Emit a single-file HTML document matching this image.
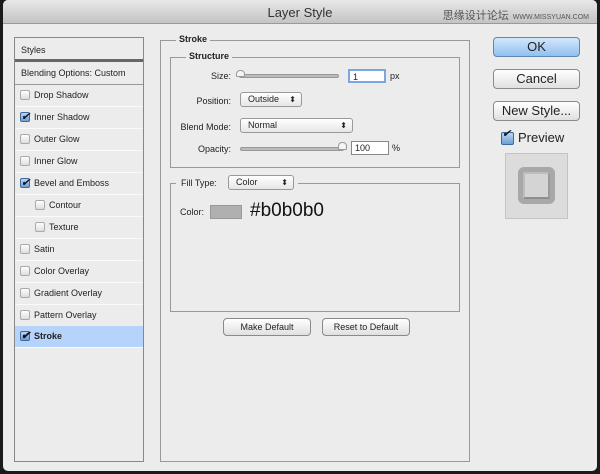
<!DOCTYPE html>
<html><head><meta charset="utf-8"><style>
*{box-sizing:border-box;margin:0;padding:0}
body{width:600px;height:474px;background:#1b1b1b;font-family:"Liberation Sans","Noto Sans CJK SC",sans-serif;font-size:9px;color:#222;position:relative;overflow:hidden}
.dlg{position:absolute;left:3px;top:0;width:594px;height:471px;background:#ececec;border-radius:5px;overflow:hidden}
.title{position:absolute;left:0;top:0;width:594px;height:24px;background:linear-gradient(#e8e8e8,#c4c4c4);border-bottom:1px solid #999;text-align:center;font-size:13px;line-height:25px;color:#333}
.wm{position:absolute;right:8px;top:4px;font-size:11px;color:#555;letter-spacing:0}
.wm small{font-size:7px;margin-left:4px}
.a{position:absolute}
.left{left:11px;top:37px;width:130px;height:425px;border:1px solid #888;background:#ececec}
.row{position:absolute;left:0;width:128px;height:22px;border-bottom:1px solid #fafafa;line-height:21px;padding-left:19px;font-size:9px}
.cb{position:absolute;left:5px;top:5px;width:10px;height:10px;border:1px solid #aaa;border-radius:2px;background:linear-gradient(#fff,#ddd)}
.cb.on{border-color:#3a6aa0;background:linear-gradient(#bcd5f0,#6f9fd6)}
.cb.on::after{content:"✔";position:absolute;left:0;top:-6px;font-size:11px;color:#111}
.grp{border:1px solid #999}
.lg{position:absolute;background:#ececec;padding:0 3px;font-weight:bold;font-size:9px}
.lbl{position:absolute;text-align:right;font-size:9px}
.sel{position:absolute;height:15px;border:1px solid #999;border-radius:3px;background:linear-gradient(#fff,#e6e6e6);font-size:9px;line-height:13px;padding-left:7px}
.sel::after{content:"⬍";position:absolute;right:5px;top:0;font-size:8px}
.slider{position:absolute;height:4px;border:1px solid #999;border-radius:2px;background:#bbb}
.inp{position:absolute;height:14px;border:1px solid #888;background:#fff;font-size:9px;line-height:12px;padding-left:3px}
.btn{position:absolute;border:1px solid #8a8a8a;border-radius:4px;background:linear-gradient(#fff,#e0e0e0);text-align:center;font-size:9px}
.bb{font-size:13px}
</style></head><body>
<div class="dlg">
<div class="title">Layer Style<span class="wm">思缘设计论坛<small>WWW.MISSYUAN.COM</small></span></div>
<div class="a left">
 <div class="row" style="top:0;height:24px;padding-left:6px;line-height:24px;border-bottom:3px solid #666">Styles</div>
 <div class="row" style="top:25px;height:22px;padding-left:6px;border-bottom:1px solid #999">Blending Options: Custom</div>
 <div class="row" style="top:47px"><i class="cb"></i>Drop Shadow</div>
 <div class="row" style="top:69px"><i class="cb on"></i>Inner Shadow</div>
 <div class="row" style="top:91px"><i class="cb"></i>Outer Glow</div>
 <div class="row" style="top:113px"><i class="cb"></i>Inner Glow</div>
 <div class="row" style="top:135px"><i class="cb on"></i>Bevel and Emboss</div>
 <div class="row" style="top:157px;padding-left:34px"><i class="cb" style="left:20px"></i>Contour</div>
 <div class="row" style="top:179px;padding-left:34px"><i class="cb" style="left:20px"></i>Texture</div>
 <div class="row" style="top:201px"><i class="cb"></i>Satin</div>
 <div class="row" style="top:223px"><i class="cb"></i>Color Overlay</div>
 <div class="row" style="top:245px"><i class="cb"></i>Gradient Overlay</div>
 <div class="row" style="top:267px"><i class="cb"></i>Pattern Overlay</div>
 <div class="row" style="top:288px;background:#b5d3fb;font-weight:bold"><i class="cb on"></i>Stroke</div>
</div>
<div class="a grp" style="left:157px;top:40px;width:310px;height:422px"></div>
<div class="lg" style="left:173px;top:34px">Stroke</div>
<div class="a grp" style="left:167px;top:57px;width:290px;height:111px"></div>
<div class="lg" style="left:183px;top:51px">Structure</div>
<div class="lbl" style="left:150px;width:78px;top:71px">Size:</div>
<div class="slider" style="left:236px;top:74px;width:100px"></div>
<div class="a" style="left:233px;top:70px;width:9px;height:7px;background:#f4f4f4;border:1px solid #999;border-radius:4px 4px 1px 1px"></div>
<div class="inp" style="left:345px;top:69px;width:38px;border:2px solid #7ca6dd">1</div>
<div class="lbl" style="left:387px;top:71px">px</div>
<div class="lbl" style="left:150px;width:78px;top:96px">Position:</div>
<div class="sel" style="left:237px;top:92px;width:62px">Outside</div>
<div class="lbl" style="left:150px;width:78px;top:122px">Blend Mode:</div>
<div class="sel" style="left:237px;top:118px;width:113px">Normal</div>
<div class="lbl" style="left:150px;width:78px;top:144px">Opacity:</div>
<div class="slider" style="left:237px;top:147px;width:104px"></div>
<div class="a" style="left:335px;top:142px;width:9px;height:8px;background:#f4f4f4;border:1px solid #999;border-radius:4px 4px 1px 1px"></div>
<div class="inp" style="left:348px;top:141px;width:38px">100</div>
<div class="lbl" style="left:389px;top:143px">%</div>
<div class="a grp" style="left:167px;top:183px;width:290px;height:129px"></div>
<div class="a" style="left:173px;top:174px;width:122px;height:18px;background:#ececec"></div>
<div class="lbl" style="left:178px;top:178px">Fill Type:</div>
<div class="sel" style="left:225px;top:175px;width:66px">Color</div>
<div class="lbl" style="left:177px;top:207px">Color:</div>
<div class="a" style="left:207px;top:205px;width:32px;height:14px;background:#b0b0b0;border:1px solid #999"></div>
<div class="a" style="left:247px;top:200px;font-size:19px;color:#111">#b0b0b0</div>
<div class="btn" style="left:220px;top:318px;width:88px;height:18px;line-height:16px">Make Default</div>
<div class="btn" style="left:319px;top:318px;width:88px;height:18px;line-height:16px">Reset to Default</div>
<div class="btn bb" style="left:490px;top:37px;width:87px;height:20px;line-height:18px;background:linear-gradient(#d4e7fb,#8fc0ef);border-color:#5c86b5">OK</div>
<div class="btn bb" style="left:490px;top:69px;width:87px;height:20px;line-height:18px">Cancel</div>
<div class="btn bb" style="left:490px;top:101px;width:87px;height:20px;line-height:18px">New Style...</div>
<i class="cb on a" style="left:498px;top:132px;width:13px;height:13px"></i>
<div class="a" style="left:515px;top:130px;font-size:13px">Preview</div>
<div class="a" style="left:502px;top:153px;width:63px;height:66px;background:#dcdcdc;border:1px solid #c4c4c4"></div>
<div class="a" style="left:515px;top:167px;width:37px;height:37px;background:#a8a8a8;border-radius:6px"></div>
<div class="a" style="left:520px;top:172px;width:27px;height:27px;background:#d4d4d4;border:2px solid #bdbdbd;border-bottom-color:#8e8e8e;border-right-color:#9a9a9a"></div>
</div>
</body></html>
